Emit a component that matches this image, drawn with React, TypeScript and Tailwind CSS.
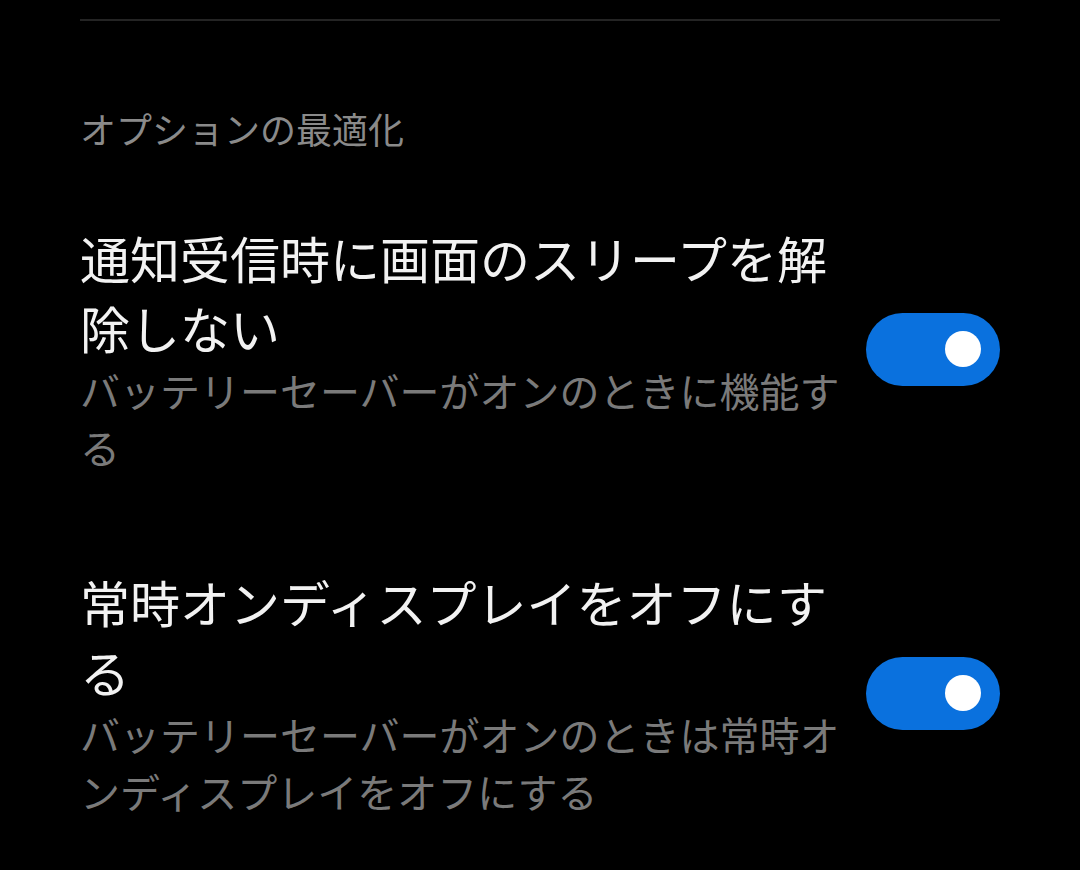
import React from "react";

type Item = {
    title: string;
    description: string;
    enabled: boolean;
};

const items: Item[] = [
    {
        title: "通知受信時に画面のスリープを解除しない",
        description: "バッテリーセーバーがオンのときに機能する",
        enabled: true,
    },
    {
        title: "常時オンディスプレイをオフにする",
        description: "バッテリーセーバーがオンのときは常時オンディスプレイをオフにする",
        enabled: true,
    },
];

function Toggle({ on }: { on: boolean }) {
    return (
        <div
            className={
                on
                    ? "flex h-[73px] w-[134px] shrink-0 items-center justify-end rounded-full bg-[#0a71de] pr-[19px]"
                    : "flex h-[73px] w-[134px] shrink-0 items-center justify-start rounded-full bg-[#3a3a3a] pl-[19px]"
            }
        >
            <div className="h-[36px] w-[36px] rounded-full bg-white" />
        </div>
    );
}

export default function App() {
    return (
        <div
            className="min-h-[870px] w-full bg-black"
            style={{ fontFamily: '"Noto Sans CJK JP", "Noto Sans", sans-serif' }}
        >
            <div className="mx-[80px] pt-[19px]">
                <div className="h-[2px] bg-[#242424]" />

                <p className="mt-[82px] text-[36px] leading-[50px] text-[#8a8a8a]">
                    オプションの最適化
                </p>

                <div className="mt-[24px]">
                    {items.map((item) => (
                        <div key={item.title} className="flex items-center gap-[16px] py-[45px]">
                            <div className="flex-1">
                                <p className="text-[50px] leading-[70px] text-[#f2f2f2]">{item.title}</p>
                                <p className="text-[40px] leading-[57px] text-[#7a7a7a]">
                                    {item.description}
                                </p>
                            </div>
                            <Toggle on={item.enabled} />
                        </div>
                    ))}
                </div>
            </div>
        </div>
    );
}
